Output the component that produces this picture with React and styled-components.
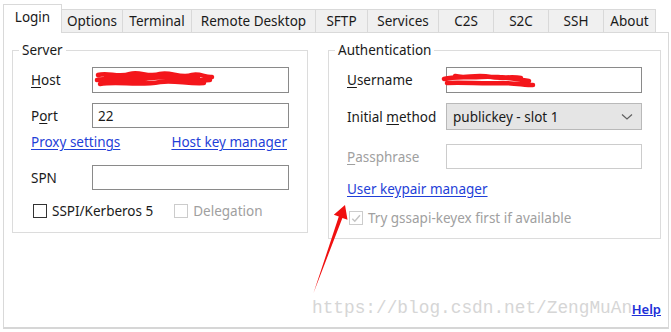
import React from "react"
import styled, { createGlobalStyle } from "styled-components"

const Global = createGlobalStyle`
body{
  margin:0;
  background:#fff;
  font-family:"Noto Sans", "Open Sans", sans-serif;
}
`

const tabs = [
  ["Login", 59],
  ["Options", 62],
  ["Terminal", 70],
  ["Remote Desktop", 125],
  ["SFTP", 53],
  ["Services", 72],
  ["C2S", 56],
  ["S2C", 56],
  ["SSH", 56],
  ["About", 53],
]

const Scribble = ({ width, left, d }) => (
  <ScribbleSvg $left={left} width={width} height="22" viewBox={`0 0 ${width} 22`}>
    <path d={d} fill="none" stroke="#f4161b" strokeWidth="4.5" strokeLinecap="round" strokeLinejoin="round" />
  </ScribbleSvg>
)

const Check = ({ disabled, checked }) => (
  <Box $disabled={disabled}>
    {checked && (
      <svg width="13" height="13" viewBox="0 0 13 13">
        <path d="M2.5 6.8 L5.2 9.5 L10.8 3" fill="none" stroke="#c4c4c4" strokeWidth="1.6" />
      </svg>
    )}
  </Box>
)

const App = () => {
  return (
    <Window>
      <Global />
      <TabBar>
        {tabs.map(([name, w], i) => (
          <Tab key={name} $w={w} $active={i === 0}>{name}</Tab>
        ))}
      </TabBar>
      <Panel>
        <Columns>
          <Group $w={296} $pb={13}>
            <Legend>Server</Legend>
            <Row $top={9} $h={26}>
              <Label $w={61}><u>H</u>ost</Label>
              <Input $w={197}>
                <Scribble width={122} left={1} d="M4 6 C14 3 24 9 36 5 C46 2 54 9 66 5 C76 2 86 10 98 6 C106 4 112 9 118 8 M3 11 C20 8 38 13 56 9 C72 6 90 13 116 11 M6 15 C24 12 44 17 66 13 C80 11 94 15 110 14 M12 9 C30 5 46 12 62 8 C78 4 92 11 104 9" />
              </Input>
            </Row>
            <Row $top={10} $h={25}>
              <Label $w={61}>P<u>o</u>rt</Label>
              <Input $w={197}>22</Input>
            </Row>
            <Row $top={5} $h={18} $between>
              <Link>Proxy settings</Link>
              <Link>Host key manager</Link>
            </Row>
            <Row $top={14} $h={25}>
              <Label $w={61}>SPN</Label>
              <Input $w={197} />
            </Row>
            <Row $top={13} $h={16}>
              <Check />
              <CheckText>SSPI/Kerberos 5</CheckText>
              <Spacer $w={19} />
              <Check disabled />
              <CheckText $disabled>Delegation</CheckText>
            </Row>
          </Group>
          <Group $w={333} $pb={12}>
            <Legend>Authentication</Legend>
            <Row $top={9} $h={26}>
              <Label $w={99}><u>U</u>sername</Label>
              <Input $w={196}>
                <Scribble width={96} left={-6} d="M3 10 C14 7 26 9 40 8 C54 7 70 9 88 12 M6 14 C22 13 42 15 62 14 C74 14 84 16 92 16 M14 7 C24 10 34 5 50 8 C60 10 70 7 80 9" />
              </Input>
            </Row>
            <Row $top={10} $h={27}>
              <Label $w={99}>Initial <u>m</u>ethod</Label>
              <Combo $w={196}>
                publickey - slot 1
                <svg width="12" height="8" viewBox="0 0 12 8">
                  <path d="M1 1.5 L6 6 L11 1.5" fill="none" stroke="#606060" strokeWidth="1.2" />
                </svg>
              </Combo>
            </Row>
            <Row $top={14} $h={25}>
              <Label $w={99} $disabled><u>P</u>assphrase</Label>
              <Input $w={196} $disabled />
            </Row>
            <Row $top={11} $h={18}>
              <Link>User keypair manager</Link>
            </Row>
            <Row $top={12} $h={16}>
              <Check disabled checked />
              <CheckText $disabled>Try gssapi-keyex first if available</CheckText>
            </Row>
          </Group>
        </Columns>
        <Footer>
          <HelpLink>Help</HelpLink>
        </Footer>
      </Panel>
      <Watermark>https://blog.csdn.net/ZengMuAn</Watermark>
      <Arrow width="671" height="332" viewBox="0 0 671 332">
        <polygon points="345,205 347.5,219.8 342.4,218 313.5,293 338.8,216.6 333.8,214.8" fill="#f01010" />
      </Arrow>
    </Window>
  )
}

export default App

const Window = styled.div`
position:relative;
width:671px;
height:332px;
overflow:hidden;
background:#fff;
`
const TabBar = styled.div`
display:flex;
align-items:flex-end;
height:33px;
padding-left:3px;
position:relative;
z-index:1;
`
const Tab = styled.div`
box-sizing:border-box;
width:${p => p.$w}px;
height:${p => (p.$active ? 29 : 23)}px;
margin-left:-1px;
&:first-child{margin-left:0;}
margin-bottom:${p => (p.$active ? 0 : 1)}px;
background:${p => (p.$active ? "#fff" : "#f0f0f0")};
border:1px solid #d9d9d9;
border-bottom:none;
position:relative;
z-index:${p => (p.$active ? 2 : 1)};
display:flex;
justify-content:center;
align-items:center;
padding-bottom:${p => (p.$active ? 4 : 0)}px;
font-size:13.5px;
color:#1a1a1a;
`
const Panel = styled.div`
box-sizing:border-box;
margin:-1px 0 0 3px;
width:666px;
height:297px;
border:1px solid #d9d9d9;
border-bottom:2px solid #d6d6d6;
display:flex;
flex-direction:column;
padding:9px 7px 0 8px;
`
const Columns = styled.div`
display:flex;
align-items:flex-start;
justify-content:space-between;
`
const Group = styled.fieldset`
box-sizing:border-box;
width:${p => p.$w}px;
margin:0;
padding:0 0 ${p => p.$pb}px 18px;
border:1px solid #dcdcdc;
min-width:0;
`
const Legend = styled.legend`
margin-left:-12px;
padding:0 3px;
line-height:16px;
font-size:13.5px;
color:#1a1a1a;
`
const Row = styled.div`
display:flex;
align-items:center;
justify-content:${p => (p.$between ? "space-between" : "flex-start")};
margin-top:${p => p.$top}px;
height:${p => p.$h}px;
padding-right:${p => (p.$between ? 20 : 0)}px;
`
const Label = styled.div`
width:${p => p.$w}px;
flex-shrink:0;
font-size:13.5px;
color:${p => (p.$disabled ? "#a0a0a0" : "#1a1a1a")};
u{text-underline-offset:2px;}
`
const Input = styled.div`
box-sizing:border-box;
position:relative;
width:${p => p.$w}px;
height:100%;
border:1px solid ${p => (p.$disabled ? "#cccccc" : "#8a8a8a")};
background:#fff;
display:flex;
align-items:center;
padding-left:5px;
font-size:13.5px;
color:#1a1a1a;
`
const ScribbleSvg = styled.svg`
position:absolute;
left:${p => p.$left}px;
top:1px;
overflow:visible;
`
const Combo = styled.div`
box-sizing:border-box;
width:${p => p.$w}px;
height:100%;
border:1px solid #b9b9b9;
background:#e5e5e5;
display:flex;
align-items:center;
justify-content:space-between;
padding:0 8px 0 6px;
font-size:13.5px;
color:#1a1a1a;
`
const Link = styled.span`
font-size:13.5px;
color:#1f3fd8;
text-decoration:underline;
text-underline-offset:2px;
`
const Box = styled.span`
box-sizing:border-box;
width:14px;
height:14px;
margin-left:2px;
border:1px solid ${p => (p.$disabled ? "#cccccc" : "#333333")};
background:#fff;
display:flex;
align-items:center;
justify-content:center;
`
const CheckText = styled.span`
margin-left:5px;
font-size:13.5px;
color:${p => (p.$disabled ? "#a0a0a0" : "#1a1a1a")};
`
const Spacer = styled.span`
width:${p => p.$w}px;
`
const Footer = styled.div`
margin-top:auto;
display:flex;
justify-content:flex-end;
padding-bottom:9px;
`
const HelpLink = styled.span`
font-size:13px;
font-weight:600;
color:#2030d8;
text-decoration:underline;
`
const Watermark = styled.div`
position:absolute;
left:312px;
top:298px;
font-family:"Liberation Mono", monospace;
font-size:17.8px;
color:#d6d6d6;
pointer-events:none;
white-space:nowrap;
z-index:2;
`
const Arrow = styled.svg`
position:absolute;
left:0;
top:0;
pointer-events:none;
z-index:3;
`
